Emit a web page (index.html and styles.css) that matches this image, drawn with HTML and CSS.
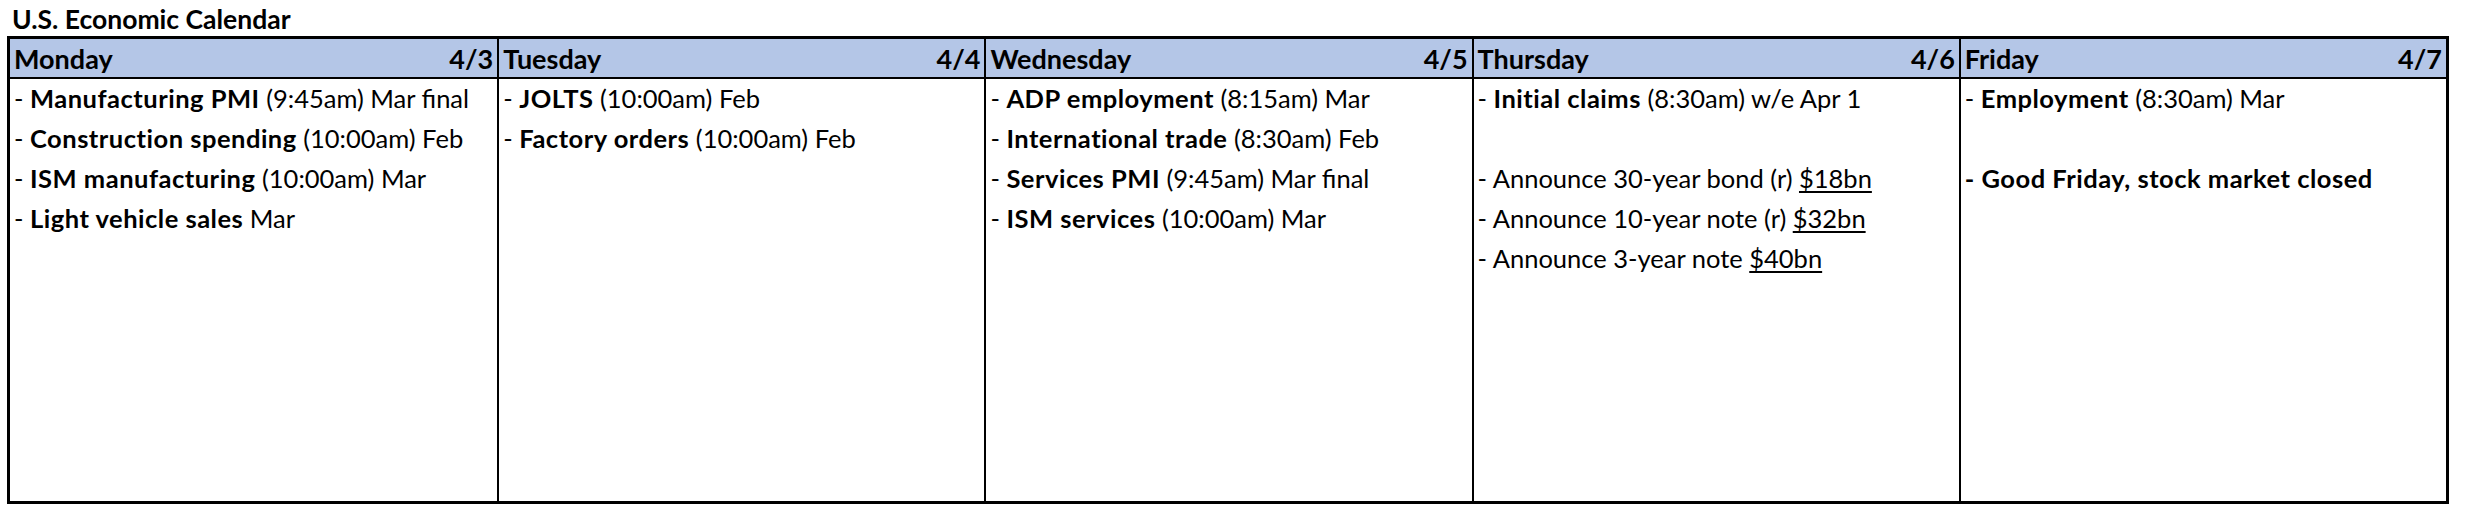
FILE: index.html
```html
<!DOCTYPE html>
<html lang="en">
<head>
<meta charset="utf-8">
<title>U.S. Economic Calendar</title>
<link rel="stylesheet" href="styles.css">
</head>
<body>
<div class="page">
  <h1 class="title">U.S. Economic Calendar</h1>
  <div class="calendar">
    <section class="day">
      <header class="day-head"><span>Monday</span><span>4/3</span></header>
      <div class="day-body">
        <p>- <b>Manufacturing PMI</b> (9:45am) Mar final</p>
        <p>- <b>Construction spending</b> (10:00am) Feb</p>
        <p>- <b>ISM manufacturing</b> (10:00am) Mar</p>
        <p>- <b>Light vehicle sales</b> Mar</p>
      </div>
    </section>
    <section class="day">
      <header class="day-head"><span>Tuesday</span><span>4/4</span></header>
      <div class="day-body">
        <p>- <b>JOLTS</b> (10:00am) Feb</p>
        <p>- <b>Factory orders</b> (10:00am) Feb</p>
      </div>
    </section>
    <section class="day">
      <header class="day-head"><span>Wednesday</span><span>4/5</span></header>
      <div class="day-body">
        <p>- <b>ADP employment</b> (8:15am) Mar</p>
        <p>- <b>International trade</b> (8:30am) Feb</p>
        <p>- <b>Services PMI</b> (9:45am) Mar final</p>
        <p>- <b>ISM services</b> (10:00am) Mar</p>
      </div>
    </section>
    <section class="day">
      <header class="day-head"><span>Thursday</span><span>4/6</span></header>
      <div class="day-body">
        <p>- <b>Initial claims</b> (8:30am) w/e Apr 1</p>
        <p class="blank"></p>
        <p>- Announce 30-year bond (r) <u>$18bn</u></p>
        <p>- Announce 10-year note (r) <u>$32bn</u></p>
        <p>- Announce 3-year note <u>$40bn</u></p>
      </div>
    </section>
    <section class="day">
      <header class="day-head"><span>Friday</span><span>4/7</span></header>
      <div class="day-body">
        <p>- <b>Employment</b> (8:30am) Mar</p>
        <p class="blank"></p>
        <p><b>- Good Friday, stock market closed</b></p>
      </div>
    </section>
  </div>
</div>
</body>
</html>
```

FILE: styles.css
```css
html, body {
  margin: 0;
  padding: 0;
  background: #ffffff;
}

body {
  font-family: Lato, "Open Sans", sans-serif;
  color: #000000;
}

.page {
  padding: 0 20px 0 7px;
}

.title {
  margin: 0;
  padding: 3px 0 0 5px;
  height: 36px;
  box-sizing: border-box;
  font-size: 26.5px;
  line-height: 32px;
  font-weight: 700;
}

.calendar {
  display: grid;
  grid-template-columns: repeat(5, 1fr);
  border: 3px solid #000000;
  width: 2442px;
  height: 468px;
  box-sizing: border-box;
}

.day {
  display: flex;
  flex-direction: column;
  border-left: 2px solid #000000;
  min-width: 0;
}

.day:first-child {
  border-left: none;
}

.day-head {
  display: flex;
  justify-content: space-between;
  align-items: center;
  height: 37px;
  padding: 1px 4px 0 4px;
  box-sizing: content-box;
  background: #b4c6e7;
  border-bottom: 2px solid #000000;
  font-size: 27px;
  font-weight: 700;
  line-height: 36px;
}

.day-body {
  flex: 1;
  padding: 0 4px;
  font-size: 25.5px;
}

.day-body p {
  margin: 0;
  height: 40px;
  line-height: 38px;
  white-space: nowrap;
}

.day-body b {
  font-weight: 700;
  letter-spacing: 0.5px;
}

.day-body u {
  text-decoration-thickness: 1.5px;
  text-underline-offset: 3px;
}
```
